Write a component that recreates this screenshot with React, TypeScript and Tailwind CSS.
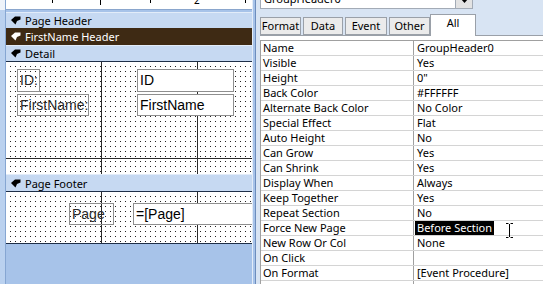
import React from "react";

const rows: [string, string][] = [
  ["Name", "GroupHeader0"],
  ["Visible", "Yes"],
  ["Height", '0"'],
  ["Back Color", "#FFFFFF"],
  ["Alternate Back Color", "No Color"],
  ["Special Effect", "Flat"],
  ["Auto Height", "No"],
  ["Can Grow", "Yes"],
  ["Can Shrink", "Yes"],
  ["Display When", "Always"],
  ["Keep Together", "Yes"],
  ["Repeat Section", "No"],
  ["Force New Page", "Before Section"],
  ["New Row Or Col", "None"],
  ["On Click", ""],
  ["On Format", "[Event Procedure]"],
  ["", ""],
];

function SectionIcon({ color }: { color: string }) {
  return (
    <svg width="10" height="9" viewBox="0 0 10 9" className="shrink-0">
      <path d="M0 4 L4 0.5 L9.5 0.5 L9.5 3.5 L6 5 L4.5 8.5 Z" fill={color} />
    </svg>
  );
}

function SectionBar({ label, dark, bottom }: { label: string; dark?: boolean; bottom?: boolean }) {
  return (
    <div
      className={`flex items-center gap-[4px] pl-[5px] ${
        dark
          ? "h-[17px] bg-[#3e2a14] text-white"
          : `bg-[#c6d9f2] text-black border-t border-[#e2ecf9] ${bottom ? "h-[17px] border-b border-b-[#1e2f48]" : "h-[16px]"}`
      }`}
    >
      <SectionIcon color={dark ? "#ffffff" : "#000000"} />
      <span className="text-[11px] leading-none">{label}</span>
    </div>
  );
}

const dots =
  "bg-[linear-gradient(90deg,#fff_4px,transparent_4px),linear-gradient(#fff_4px,#222_4px)] bg-[length:5px_5px]";

function Label({ text, className }: { text: string; className: string }) {
  return (
    <div
      className={`absolute border border-[#8e8e8e] font-['Liberation_Sans',sans-serif] text-[14px] leading-[20px] text-[#2a2a2a] pl-[2px] ${className}`}
    >
      {text}
    </div>
  );
}

function TextBox({ text, className }: { text: string; className: string }) {
  return (
    <div
      className={`absolute bg-white border border-[#8e8e8e] font-['Liberation_Sans',sans-serif] text-[14px] leading-[20px] text-black pl-[2px] ${className}`}
    >
      {text}
    </div>
  );
}

export default function App() {
  return (
    <div className="w-[543px] h-[284px] flex overflow-hidden bg-[#d8e4f3] font-['Noto_Sans',sans-serif]">
      {/* Report design surface */}
      <div className="w-[256px] h-full flex shrink-0 bg-[#a7c3e9]">
        <div className="w-[6px] h-full flex flex-col border-r border-[#86a6d2]">
          <div className="h-[10px] bg-[#eef3fa]" />
          <div className="flex-1 bg-[#bad1ef]" />
        </div>
        <div className="w-[246px] h-full flex flex-col overflow-hidden">
          {/* ruler */}
          <div className="h-[10px] bg-white border-b border-[#8aa6cd] shrink-0">
            <svg width="246" height="9" viewBox="0 0 246 9">
              <line x1="46.5" y1="0" x2="46.5" y2="3" stroke="#000" />
              <line x1="94.5" y1="0" x2="94.5" y2="5" stroke="#000" />
              <line x1="144.5" y1="0" x2="144.5" y2="3" stroke="#000" />
              <line x1="239.5" y1="0" x2="239.5" y2="3" stroke="#000" />
              <text x="188" y="4" fontSize="10" fontFamily="Noto Sans, sans-serif" fill="#000">
                2
              </text>
            </svg>
          </div>
          <div className="h-[2px] shrink-0" />
          <SectionBar label="Page Header" />
          <SectionBar label="FirstName Header" dark />
          <SectionBar label="Detail" bottom />
          {/* Detail body */}
          <div className={`relative h-[112px] shrink-0 ${dots}`}>
            <div className="absolute left-[95px] top-0 bottom-0 w-px bg-[#2b2b2b]" />
            <div className="absolute left-[191px] top-0 bottom-0 w-px bg-[#2b2b2b]" />
            <div className="absolute left-0 right-0 top-[96px] h-px bg-[#2b2b2b]" />
            <Label text="ID:" className="left-[11px] top-[7px] w-[23px] h-[23px]" />
            <Label text="FirstName:" className="left-[11px] top-[32px] w-[72px] h-[22px]" />
            <TextBox text="ID" className="left-[131px] top-[7px] w-[97px] h-[23px]" />
            <TextBox text="FirstName" className="left-[131px] top-[32px] w-[97px] h-[22px]" />
          </div>
          <div className="h-[18px] shrink-0 flex items-center gap-[4px] pl-[5px] bg-[#c6d9f2] border-t border-[#e2ecf9] border-b border-b-[#1e2f48]">
            <SectionIcon color="#000000" />
            <span className="text-[11px] leading-none">Page Footer</span>
          </div>
          {/* Footer body */}
          <div className={`relative h-[52px] shrink-0 border-b border-[#1e2f48] ${dots}`}>
            <div className="absolute left-[95px] top-0 bottom-0 w-px bg-[#2b2b2b]" />
            <div className="absolute left-[191px] top-0 bottom-0 w-px bg-[#2b2b2b]" />
            <Label text="Page" className="left-[63px] top-[11px] w-[45px] h-[22px]" />
            <TextBox text="=[Page]" className="left-[127px] top-[11px] w-[130px] h-[22px]" />
          </div>
          <div className="flex-1" />
        </div>
        <div className="w-[4px] h-full border-l border-[#e3ecf8] border-r border-r-[#6d8dbd]" />
      </div>

      {/* Property sheet */}
      <div className="flex-1 h-full flex flex-col pl-[4px] min-w-0">
        <div className="-mt-[12px] h-[21px] w-[213px] flex bg-white border border-[#a3abb6] shrink-0">
          <div className="flex-1 text-[11px] leading-[19px] pl-[3px]">GroupHeader0</div>
          <div className="w-[17px] h-full bg-[#e3e3e3] border-l border-[#a3abb6] flex items-end justify-center pb-[5px]">
            <svg width="7" height="4" viewBox="0 0 7 4">
              <path d="M0 0 L7 0 L3.5 4 Z" fill="#000" />
            </svg>
          </div>
        </div>
        <div className="mt-[5px] h-[21px] flex items-end gap-[2px] shrink-0">
          {[
            ["Format", "w-[41px]"],
            ["Data", "w-[40px]"],
            ["Event", "w-[42px]"],
            ["Other", "w-[41px]"],
          ].map(([t, w]) => (
            <div
              key={t}
              className={`${w} h-[18px] bg-[#ebebeb] border border-[#9aa0a8] text-[11px] leading-[15px] text-center text-black`}
            >
              {t}
            </div>
          ))}
          <div className="w-[46px] -ml-[2px] h-[22px] -mb-px relative z-10 bg-white border border-b-0 border-[#9aa0a8] text-[11px] leading-[16px] text-center text-black">
            All
          </div>
        </div>
        <div className="flex-1 bg-white border-t border-[#9aa0a8] pt-[4px] relative">
          <div className="border-t border-l border-[#a0a0a0]">
            {rows.map(([k, v], i) => (
              <div key={i} className="flex h-[15px] border-b border-[#d4d4d4] text-[11px] leading-[14px] text-black">
                <div className="w-[153px] shrink-0 border-r border-[#a0a0a0] pl-[2px] whitespace-nowrap overflow-hidden">{k}</div>
                <div className="flex-1 pl-[1px] whitespace-nowrap overflow-hidden">
                  {v === "Before Section" ? (
                    <span className="inline-block bg-black text-white px-[2px] leading-[14px]">{v}</span>
                  ) : (
                    <span className="pl-[2px]">{v}</span>
                  )}
                </div>
              </div>
            ))}
          </div>
          <svg
            className="absolute left-[245px] top-[186px]"
            width="9"
            height="17"
            viewBox="0 0 9 17"
          >
            <path d="M1 1.5 H3.5 M5.5 1.5 H8 M4.5 2 V15 M1 15.5 H3.5 M5.5 15.5 H8" stroke="#000" strokeWidth="1" fill="none" />
          </svg>
        </div>
      </div>
    </div>
  );
}
